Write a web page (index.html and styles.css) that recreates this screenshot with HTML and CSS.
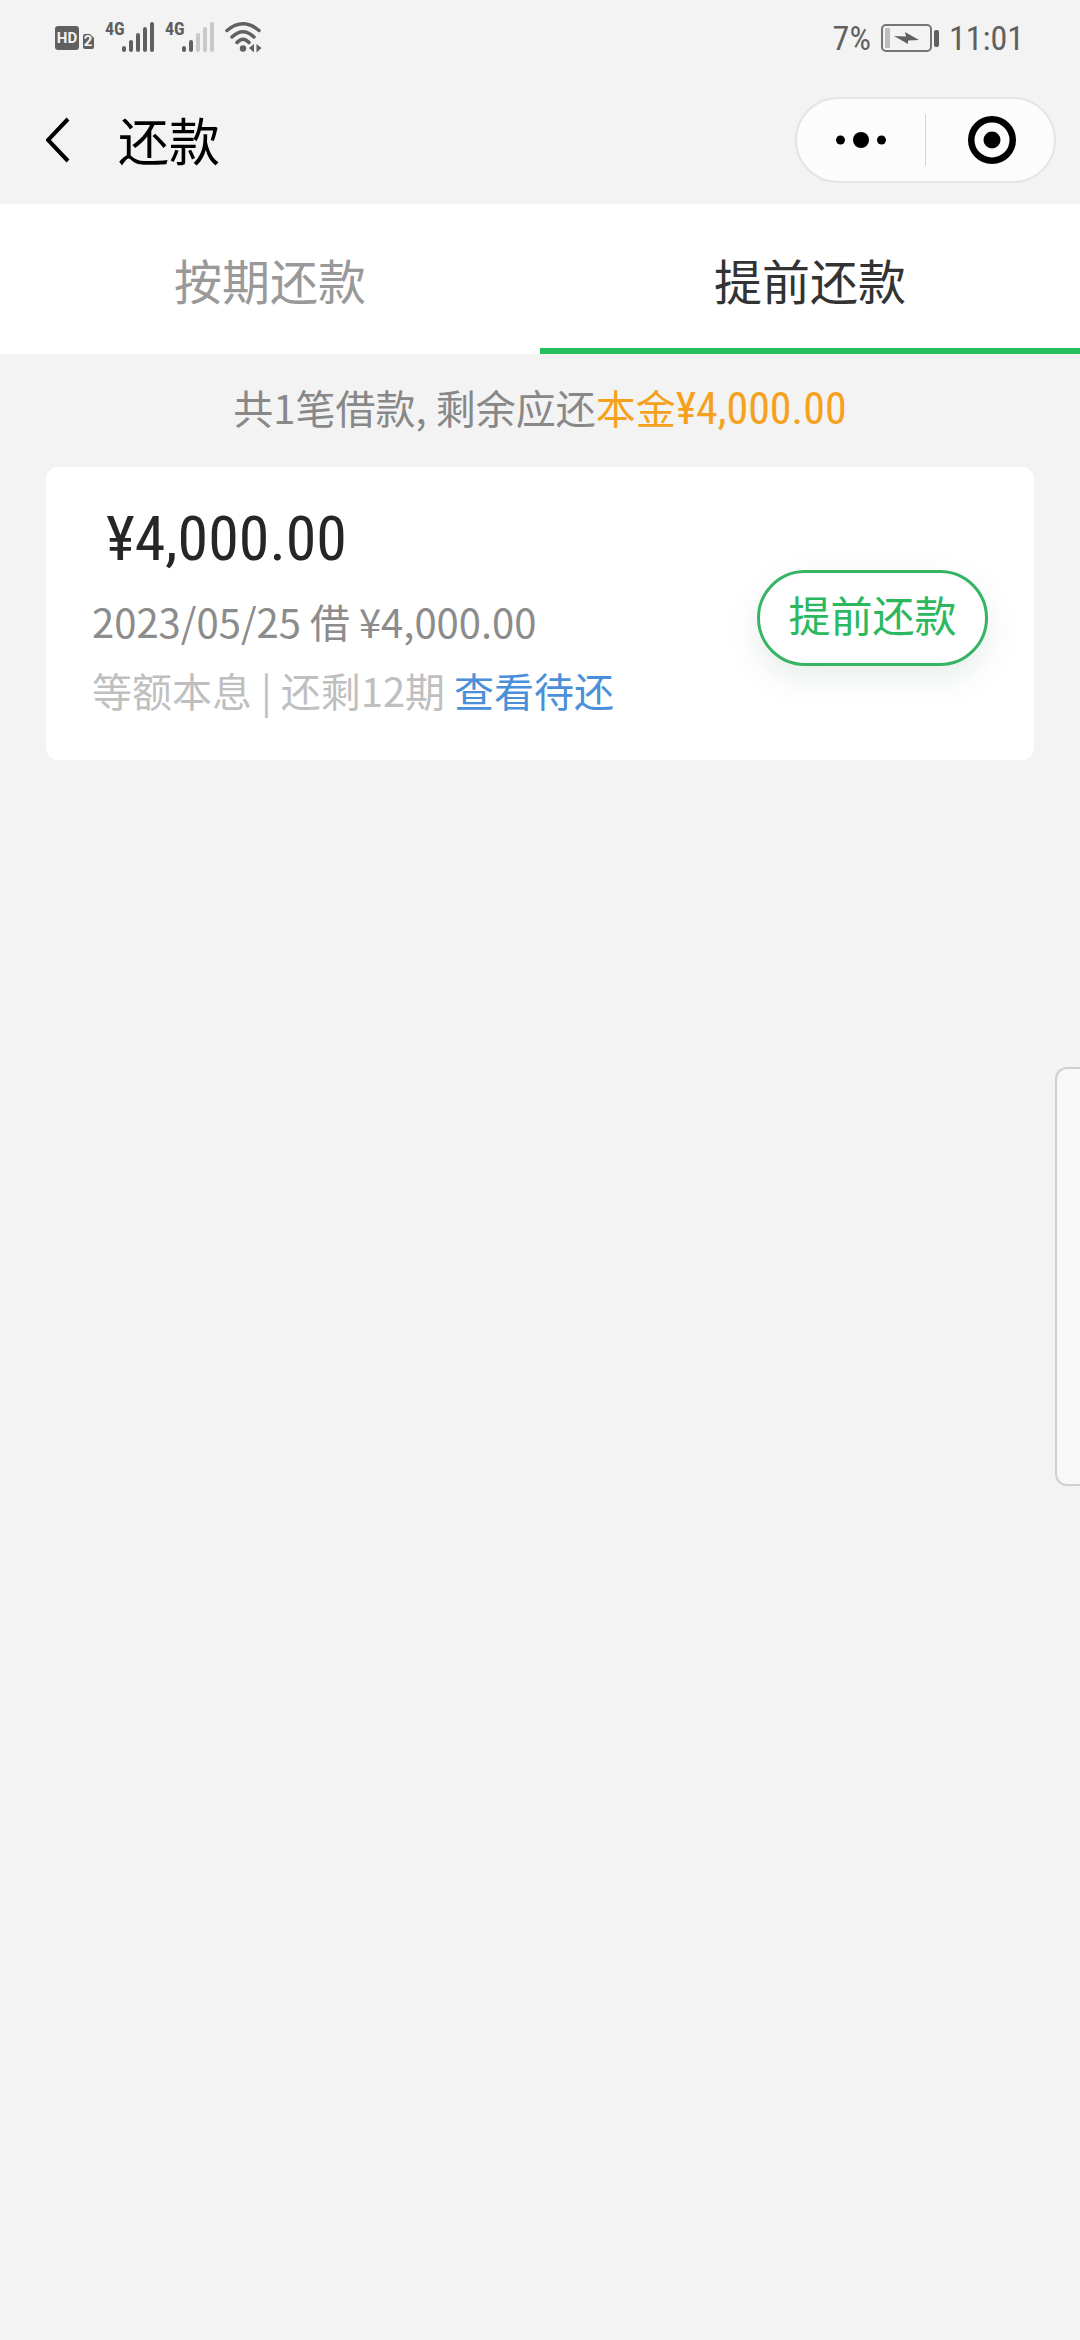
FILE: index.html
```html
<!DOCTYPE html>
<html lang="zh-CN">
<head>
<meta charset="utf-8">
<meta name="viewport" content="width=device-width">
<title>还款</title>
<link rel="stylesheet" href="styles.css">
</head>
<body>
<div class="status-bar">
  <div class="status-icons">
    <svg width="40" height="40" viewBox="0 -4 40 40">
      <rect x="0" y="4" width="24" height="24" rx="3" fill="#606060"/>
      <text class="hd-label" x="12" y="21" text-anchor="middle">HD</text>
      <path d="M28 14q0-2 2-2h5l4 4v9q0 2-2 2h-7q-2 0-2-2z" fill="#606060"/>
      <text class="sim-label" x="33" y="24" text-anchor="middle">2</text>
    </svg>
    <svg width="50" height="40" viewBox="0 -4 50 40">
      <text class="net-label" x="0" y="13">4G</text>
      <path d="M19 26v2M26 20v8M33 13v15M40 7v21M47 2v26" stroke="#606060" stroke-width="4" stroke-linecap="round"/>
    </svg>
    <svg width="50" height="40" viewBox="0 -4 50 40">
      <text class="net-label" x="0" y="13">4G</text>
      <path d="M19 26v2M26 20v8" stroke="#606060" stroke-width="4" stroke-linecap="round"/>
      <path d="M33 13v15M40 7v21M47 2v26" stroke="#c8c8c8" stroke-width="4" stroke-linecap="round"/>
    </svg>
    <svg width="38" height="40" viewBox="0 -4 38 40">
      <path d="M2 8.500Q18-5 34 8.500M7 15Q18 4.500 29 15M12 20.500Q18 14 24 20.500" fill="none" stroke="#606060" stroke-width="3.500" stroke-linecap="round"/>
      <circle cx="18" cy="26.500" r="3.200" fill="#606060"/>
      <path d="M29 22v8.500l-5-4.500zM31.500 22v8.500l5-4.500z" fill="#606060"/>
    </svg>
  </div>
  <div class="status-right">
    <span>7%</span>
    <svg width="58" height="28" viewBox="0 0 58 28">
      <rect x="1" y="1" width="49" height="26" rx="4" fill="none" stroke="#757575" stroke-width="2"/>
      <rect x="4" y="4" width="5" height="20" rx="1" fill="#bdbdbd"/>
      <path d="M13 12l12 .5-1-4.500L38 16l-11 .5V20z" fill="#606060"/>
      <rect x="53" y="6" width="5" height="17" rx="2" fill="#606060"/>
    </svg>
    <span>11:01</span>
  </div>
</div>

<header class="nav-bar">
  <button class="back" type="button" aria-label="返回">
    <svg width="24" height="48" viewBox="0 0 24 48"><path d="M22 3L2 24l20 21" fill="none" stroke="#000" stroke-width="4"/></svg>
  </button>
  <h1 class="title">还款</h1>
  <div class="capsule">
    <button type="button" aria-label="更多">
      <svg width="52" height="18" viewBox="0 0 52 18"><circle cx="5.500" cy="9" r="4.500"/><circle cx="26" cy="9" r="8"/><circle cx="46.500" cy="9" r="4.500"/></svg>
    </button>
    <span class="divider"></span>
    <button class="close" type="button" aria-label="关闭">
      <svg width="48" height="48" viewBox="0 0 48 48"><circle cx="24" cy="24" r="20.750" fill="none" stroke="#000" stroke-width="6.500"/><circle cx="24" cy="24" r="8.500"/></svg>
    </button>
  </div>
</header>

<nav class="tabs">
  <button class="tab" type="button">按期还款</button>
  <button class="tab active" type="button">提前还款</button>
</nav>

<main>
  <p class="summary">共1笔借款, 剩余应还<span class="principal">本金<span class="number">¥4,000.00</span></span></p>
  <section class="card">
    <div class="loan">
      <p class="amount">¥4,000.00</p>
      <p class="detail">2023/05/25 借 ¥4,000.00</p>
      <p class="detail terms">等额本息 | 还剩12期 <a href="#">查看待还</a></p>
    </div>
    <button class="repay" type="button">提前还款</button>
  </section>
</main>
<aside class="side-panel"></aside>
</body>
</html>
```
FILE: styles.css
```css
* {
  box-sizing: border-box;
}

body {
  margin: 0;
  min-height: 100vh;
  background: #f3f3f3;
  color: #333;
  font-family: "Noto Sans CJK SC", sans-serif;
}

h1,
p {
  margin: 0;
  font-weight: 400;
}

button {
  margin: 0;
  padding: 0;
  border: 0;
  background: none;
  color: inherit;
  font: inherit;
}

svg {
  display: block;
}

/* Status bar */
.status-bar {
  display: flex;
  justify-content: space-between;
  align-items: center;
  height: 76px;
  padding: 0 56px 0 55px;
}

.status-icons {
  display: flex;
  gap: 10px;
}

.status-right {
  display: flex;
  align-items: center;
  gap: 10px;
  color: #606060;
  font: 34px/40px "Roboto Condensed", Roboto, sans-serif;
}

.hd-label,
.sim-label {
  fill: #f3f3f3;
  font: 700 15px Roboto, sans-serif;
}

.net-label {
  fill: #606060;
  font: 700 18px "Roboto Condensed", Roboto, sans-serif;
}

/* Navigation bar */
.nav-bar {
  display: flex;
  align-items: center;
  height: 128px;
  padding: 0 24px 0 46px;
}

.title {
  flex: 1;
  margin-left: 48px;
  padding-bottom: 2px;
  color: #000;
  font-size: 51px;
  line-height: 72px;
}

.capsule {
  display: flex;
  align-items: center;
  width: 261px;
  height: 86px;
  border: 2px solid #e4e4e4;
  border-radius: 43px;
  background: #fcfcfc;
}

.capsule button {
  display: flex;
  width: 50%;
  align-items: center;
  justify-content: center;
  height: 100%;
}

.capsule .close {
  padding-left: 4px;
}

.divider {
  flex: none;
  width: 1px;
  height: 52px;
  background: #d8d8d8;
}

/* Tabs */
.tabs {
  display: flex;
  background: #fff;
}

.tab {
  flex: 1;
  height: 150px;
  padding-top: 6px;
  border-bottom: 6px solid transparent;
  color: #999;
  font-size: 48px;
  line-height: 72px;
}

.tab.active {
  border-color: #26bf5e;
  color: #333;
}

/* Loans */
.summary {
  padding: 23px 0 30px;
  color: #888;
  font-size: 40px;
  line-height: 60px;
  text-align: center;
}

.principal {
  color: #f5a11d;
}

.number {
  font: 400 44px/40px "Roboto Condensed", Roboto, sans-serif;
}

.card {
  display: flex;
  align-items: center;
  justify-content: space-between;
  margin: 0 46px;
  padding: 36px 46px 35px;
  border-radius: 12px;
  background: #fff;
}

.amount {
  margin-bottom: 12px;
  padding-left: 14px;
  color: #262626;
  font: 400 62px/72px "Roboto Condensed", Roboto, sans-serif;
}

.detail {
  color: #8c8c8c;
  font-size: 40px;
  line-height: 69px;
}

.terms {
  color: #bfbfbf;
}

.terms a {
  color: #4a90d9;
  text-decoration: none;
}

.repay {
  width: 231px;
  height: 96px;
  margin-top: 8px;
  padding-bottom: 8px;
  border: 3px solid #36b364;
  border-radius: 48px;
  background: #fff;
  box-shadow: 0 12px 32px rgba(30, 90, 50, 0.1);
  color: #2bb85e;
  font-size: 42px;
  line-height: 60px;
}

/* Edge panel that floats over the page */
.side-panel {
  position: fixed;
  top: 1067px;
  right: 0;
  width: 25px;
  height: 419px;
  border: 2px solid #d0d0d0;
  border-right: 0;
  border-radius: 12px 0 0 12px;
  background: #f8f8f8;
}
```
